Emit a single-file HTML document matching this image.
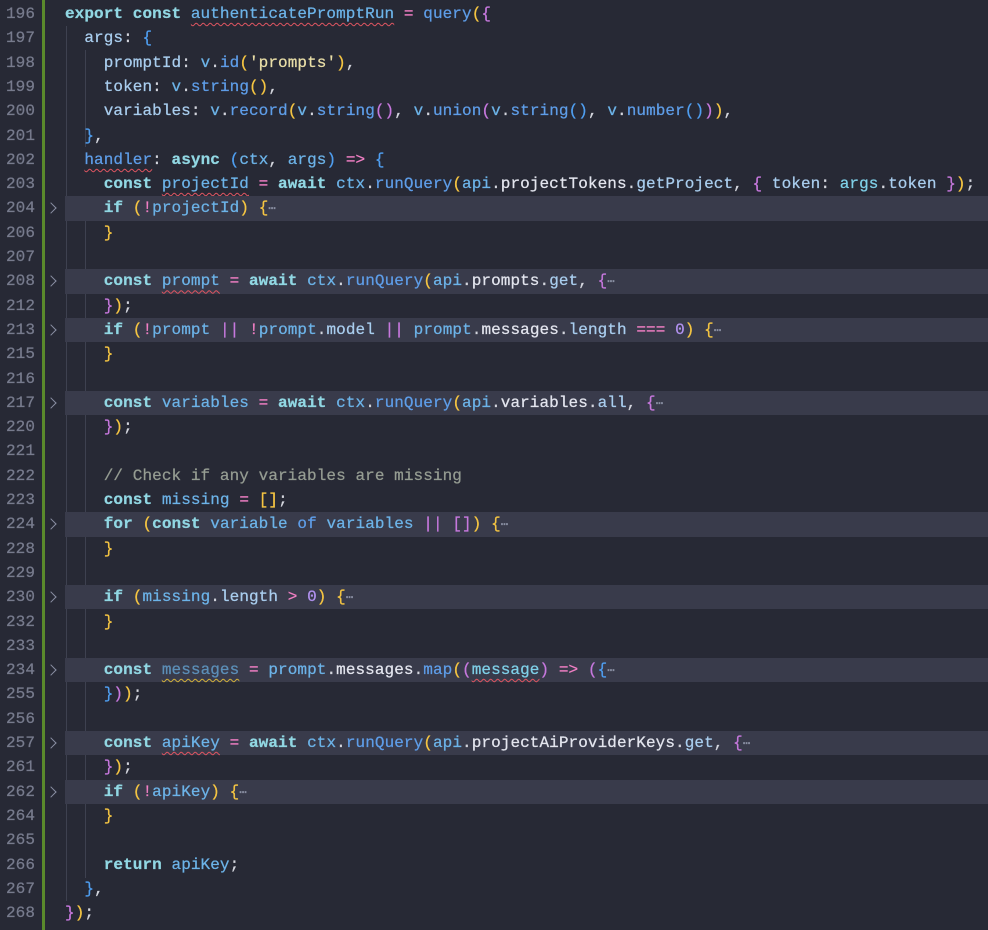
<!DOCTYPE html>
<html><head><meta charset="utf-8"><style>
html,body{margin:0;padding:0;background:#272935;width:988px;height:930px;overflow:hidden}
#ed{position:relative;width:988px;height:930px;font-family:"Liberation Mono",monospace;font-size:16px;letter-spacing:0.08px;-webkit-text-stroke:0.25px currentColor}
.row{position:absolute;left:0;width:988px;height:24.3px;line-height:24.3px}
.ln{position:absolute;right:953px;color:#777b8d;text-align:right;width:40px}
.code{position:absolute;left:65px;white-space:pre;color:#cad3f5}
.hl{position:absolute;left:65px;right:0;top:0;height:24.3px;background:#393b4b}
.chev{position:absolute;left:47px;top:8px;width:7px;height:7px;border-right:1.3px solid #8a8fa3;border-top:1.3px solid #8a8fa3;transform:rotate(45deg)}
.k{color:#91d7e3;font-weight:bold}
.v{color:#6cb3e8}
.f{color:#5e9de8}
.p{color:#e3e5ee}
.q{color:#a9cdee}
.o{color:#f07fc4}
.y{color:#f5c542}
.m{color:#c678dd}
.b{color:#4f9ef0}
.c{color:#959c92}
.s{color:#eadfa8}
.n{color:#b292f0}
.w{color:#d4d6de}
.el{color:#8a8fa3;font-size:12px}
.sr{text-decoration:underline wavy #e05561;text-decoration-thickness:1px;text-underline-offset:4px}
.sy{text-decoration:underline wavy #d4b23a;text-decoration-thickness:1px;text-underline-offset:4px}
.green{position:absolute;left:42px;top:0;width:3px;height:930px;background:#5a8a2c}
.guide{position:absolute;width:1px;background:#3e4150}
</style></head><body><div id="ed">
<div class="green"></div>
<div class="guide" style="left:66px;top:26px;height:875px"></div>
<div class="guide" style="left:85px;top:50px;height:97px"></div>
<div class="guide" style="left:85px;top:196px;height:682px"></div>
<div class="row" style="top:2px"><span class="ln">196</span><span class="code"><span class="k">export const</span> <span class="v sr">authenticatePromptRun</span> <span class="o">=</span> <span class="f">query</span><span class="y">(</span><span class="m">{</span></span></div>
<div class="row" style="top:26.3px"><span class="ln">197</span><span class="code">  <span class="q">args</span><span class="w">:</span> <span class="b">{</span></span></div>
<div class="row" style="top:50.6px"><span class="ln">198</span><span class="code">    <span class="q">promptId</span><span class="w">:</span> <span class="v">v</span><span class="w">.</span><span class="f">id</span><span class="y">(</span><span class="s">'prompts'</span><span class="y">)</span><span class="w">,</span></span></div>
<div class="row" style="top:74.9px"><span class="ln">199</span><span class="code">    <span class="q">token</span><span class="w">:</span> <span class="v">v</span><span class="w">.</span><span class="f">string</span><span class="y">()</span><span class="w">,</span></span></div>
<div class="row" style="top:99.2px"><span class="ln">200</span><span class="code">    <span class="q">variables</span><span class="w">:</span> <span class="v">v</span><span class="w">.</span><span class="f">record</span><span class="y">(</span><span class="v">v</span><span class="w">.</span><span class="f">string</span><span class="m">()</span><span class="w">,</span> <span class="v">v</span><span class="w">.</span><span class="f">union</span><span class="m">(</span><span class="v">v</span><span class="w">.</span><span class="f">string</span><span class="b">()</span><span class="w">,</span> <span class="v">v</span><span class="w">.</span><span class="f">number</span><span class="b">()</span><span class="m">)</span><span class="y">)</span><span class="w">,</span></span></div>
<div class="row" style="top:123.5px"><span class="ln">201</span><span class="code">  <span class="b">}</span><span class="w">,</span></span></div>
<div class="row" style="top:147.8px"><span class="ln">202</span><span class="code">  <span class="f sr">handler</span><span class="w">:</span> <span class="k">async</span> <span class="b">(</span><span class="v">ctx</span><span class="w">,</span> <span class="v">args</span><span class="b">)</span> <span class="o">=&gt;</span> <span class="b">{</span></span></div>
<div class="row" style="top:172.1px"><span class="ln">203</span><span class="code">    <span class="k">const</span> <span class="v sr">projectId</span> <span class="o">=</span> <span class="k">await</span> <span class="v">ctx</span><span class="w">.</span><span class="f">runQuery</span><span class="y">(</span><span class="v">api</span><span class="w">.</span><span class="p">projectTokens</span><span class="w">.</span><span class="q">getProject</span><span class="w">,</span> <span class="m">{</span> <span class="q">token</span><span class="w">:</span> <span class="v" style="color:#7fd0e8">args</span><span class="w">.</span><span class="q">token</span> <span class="m">}</span><span class="y">)</span><span class="w">;</span></span></div>
<div class="row" style="top:196.4px"><div class="hl"></div><div class="chev"></div><span class="ln">204</span><span class="code">    <span class="k">if</span> <span class="y">(</span><span class="o">!</span><span class="v">projectId</span><span class="y">)</span> <span class="y">{</span><span class="el">⋯</span></span></div>
<div class="row" style="top:220.7px"><span class="ln">206</span><span class="code">    <span class="y">}</span></span></div>
<div class="row" style="top:245px"><span class="ln">207</span><span class="code"></span></div>
<div class="row" style="top:269.3px"><div class="hl"></div><div class="chev"></div><span class="ln">208</span><span class="code">    <span class="k">const</span> <span class="v sr">prompt</span> <span class="o">=</span> <span class="k">await</span> <span class="v">ctx</span><span class="w">.</span><span class="f">runQuery</span><span class="y">(</span><span class="v">api</span><span class="w">.</span><span class="p">prompts</span><span class="w">.</span><span class="q">get</span><span class="w">,</span> <span class="m">{</span><span class="el">⋯</span></span></div>
<div class="row" style="top:293.6px"><span class="ln">212</span><span class="code">    <span class="m">}</span><span class="y">)</span><span class="w">;</span></span></div>
<div class="row" style="top:317.9px"><div class="hl"></div><div class="chev"></div><span class="ln">213</span><span class="code">    <span class="k">if</span> <span class="y">(</span><span class="o">!</span><span class="v">prompt</span> <span class="m">||</span> <span class="o">!</span><span class="v">prompt</span><span class="w">.</span><span class="q">model</span> <span class="m">||</span> <span class="v">prompt</span><span class="w">.</span><span class="p">messages</span><span class="w">.</span><span class="q">length</span> <span class="o">===</span> <span class="n">0</span><span class="y">)</span> <span class="y">{</span><span class="el">⋯</span></span></div>
<div class="row" style="top:342.2px"><span class="ln">215</span><span class="code">    <span class="y">}</span></span></div>
<div class="row" style="top:366.5px"><span class="ln">216</span><span class="code"></span></div>
<div class="row" style="top:390.8px"><div class="hl"></div><div class="chev"></div><span class="ln">217</span><span class="code">    <span class="k">const</span> <span class="v">variables</span> <span class="o">=</span> <span class="k">await</span> <span class="v">ctx</span><span class="w">.</span><span class="f">runQuery</span><span class="y">(</span><span class="v">api</span><span class="w">.</span><span class="p">variables</span><span class="w">.</span><span class="q">all</span><span class="w">,</span> <span class="m">{</span><span class="el">⋯</span></span></div>
<div class="row" style="top:415.1px"><span class="ln">220</span><span class="code">    <span class="m">}</span><span class="y">)</span><span class="w">;</span></span></div>
<div class="row" style="top:439.4px"><span class="ln">221</span><span class="code"></span></div>
<div class="row" style="top:463.7px"><span class="ln">222</span><span class="code">    <span class="c">// Check if any variables are missing</span></span></div>
<div class="row" style="top:488px"><span class="ln">223</span><span class="code">    <span class="k">const</span> <span class="v">missing</span> <span class="o">=</span> <span class="y">[]</span><span class="w">;</span></span></div>
<div class="row" style="top:512.3px"><div class="hl"></div><div class="chev"></div><span class="ln">224</span><span class="code">    <span class="k">for</span> <span class="y">(</span><span class="k">const</span> <span class="v">variable</span> <span class="f">of</span> <span class="v">variables</span> <span class="m">||</span> <span class="m">[]</span><span class="y">)</span> <span class="y">{</span><span class="el">⋯</span></span></div>
<div class="row" style="top:536.6px"><span class="ln">228</span><span class="code">    <span class="y">}</span></span></div>
<div class="row" style="top:560.9px"><span class="ln">229</span><span class="code"></span></div>
<div class="row" style="top:585.2px"><div class="hl"></div><div class="chev"></div><span class="ln">230</span><span class="code">    <span class="k">if</span> <span class="y">(</span><span class="v">missing</span><span class="w">.</span><span class="q">length</span> <span class="o">&gt;</span> <span class="n">0</span><span class="y">)</span> <span class="y">{</span><span class="el">⋯</span></span></div>
<div class="row" style="top:609.5px"><span class="ln">232</span><span class="code">    <span class="y">}</span></span></div>
<div class="row" style="top:633.8px"><span class="ln">233</span><span class="code"></span></div>
<div class="row" style="top:658.1px"><div class="hl"></div><div class="chev"></div><span class="ln">234</span><span class="code">    <span class="k">const</span> <span class="v sy" style="color:#5c8fb8">messages</span> <span class="o">=</span> <span class="v">prompt</span><span class="w">.</span><span class="p">messages</span><span class="w">.</span><span class="f">map</span><span class="y">(</span><span class="m">(</span><span class="v sr" style="color:#7fd0e8">message</span><span class="m">)</span> <span class="o">=&gt;</span> <span class="m">(</span><span class="b">{</span><span class="el">⋯</span></span></div>
<div class="row" style="top:682.4px"><span class="ln">255</span><span class="code">    <span class="b">}</span><span class="m">)</span><span class="y">)</span><span class="w">;</span></span></div>
<div class="row" style="top:706.7px"><span class="ln">256</span><span class="code"></span></div>
<div class="row" style="top:731px"><div class="hl"></div><div class="chev"></div><span class="ln">257</span><span class="code">    <span class="k">const</span> <span class="v sr">apiKey</span> <span class="o">=</span> <span class="k">await</span> <span class="v">ctx</span><span class="w">.</span><span class="f">runQuery</span><span class="y">(</span><span class="v">api</span><span class="w">.</span><span class="p">projectAiProviderKeys</span><span class="w">.</span><span class="q">get</span><span class="w">,</span> <span class="m">{</span><span class="el">⋯</span></span></div>
<div class="row" style="top:755.3px"><span class="ln">261</span><span class="code">    <span class="m">}</span><span class="y">)</span><span class="w">;</span></span></div>
<div class="row" style="top:779.6px"><div class="hl"></div><div class="chev"></div><span class="ln">262</span><span class="code">    <span class="k">if</span> <span class="y">(</span><span class="o">!</span><span class="v">apiKey</span><span class="y">)</span> <span class="y">{</span><span class="el">⋯</span></span></div>
<div class="row" style="top:803.9px"><span class="ln">264</span><span class="code">    <span class="y">}</span></span></div>
<div class="row" style="top:828.2px"><span class="ln">265</span><span class="code"></span></div>
<div class="row" style="top:852.5px"><span class="ln">266</span><span class="code">    <span class="k">return</span> <span class="v">apiKey</span><span class="w">;</span></span></div>
<div class="row" style="top:876.8px"><span class="ln">267</span><span class="code">  <span class="b">}</span><span class="w">,</span></span></div>
<div class="row" style="top:901.1px"><span class="ln">268</span><span class="code"><span class="m">}</span><span class="y">)</span><span class="w">;</span></span></div>
</div></body></html>
